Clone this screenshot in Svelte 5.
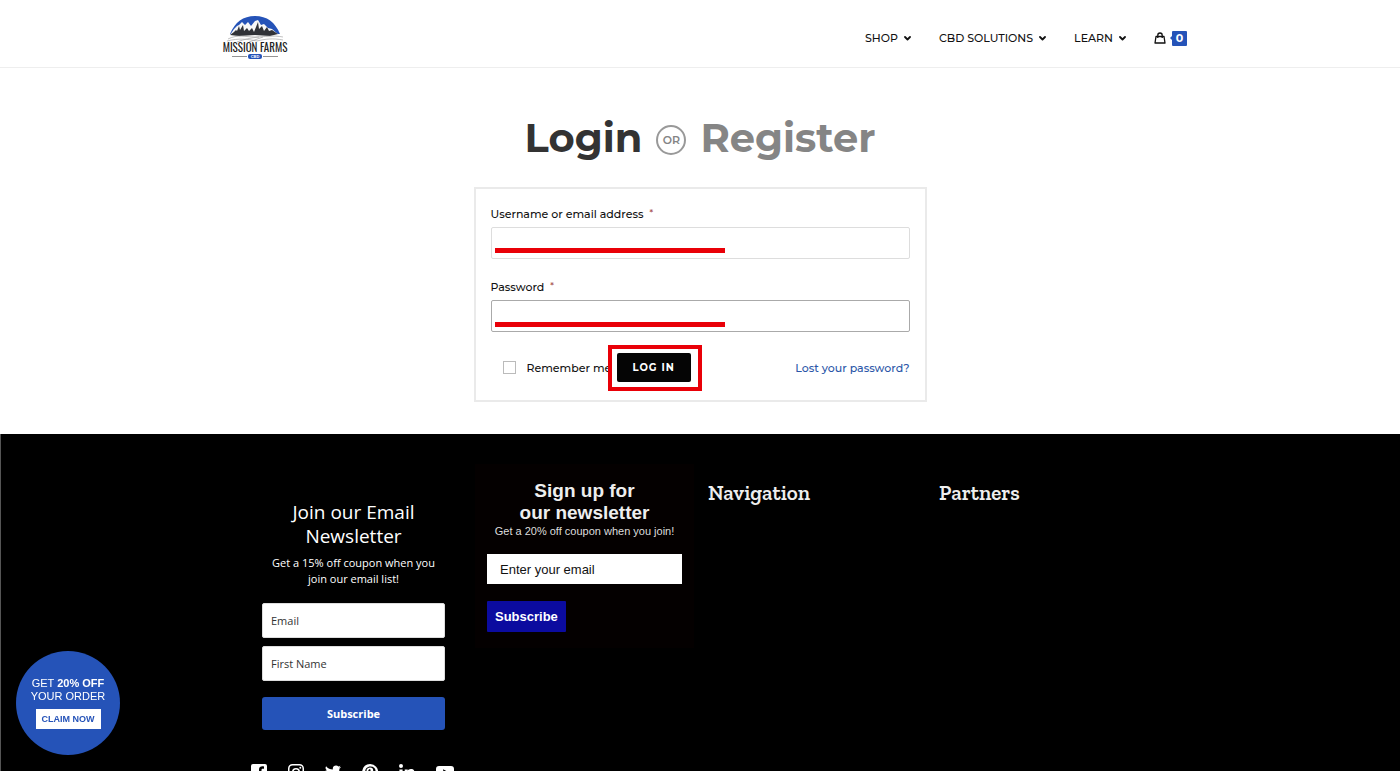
<script>
  const menu = ['Shop', 'CBD Solutions', 'Learn'];

  const socials = [
    {
      name: 'Facebook',
      d: 'M2 0h12a2 2 0 0 1 2 2v12a2 2 0 0 1-2 2h-3.500V10h2l.4-2.500h-2.400V6c0-.8.4-1.300 1.400-1.300h1.100V2.500c-2.800-.5-5 .3-5 3.200v1.800H6V10h2v6H2a2 2 0 0 1-2-2V2a2 2 0 0 1 2-2z'
    },
    {
      name: 'Instagram',
      d: 'M4.500 0h7A4.500 4.500 0 0 1 16 4.500v7a4.500 4.500 0 0 1-4.500 4.500h-7A4.500 4.500 0 0 1 0 11.500v-7A4.500 4.500 0 0 1 4.500 0zm.2 1.500a3.200 3.200 0 0 0-3.200 3.200v6.600a3.200 3.200 0 0 0 3.200 3.200h6.600a3.200 3.200 0 0 0 3.200-3.200V4.700a3.200 3.200 0 0 0-3.200-3.200zM8 4a4 4 0 1 1 0 8 4 4 0 0 1 0-8zm0 1.500a2.500 2.500 0 1 0 0 5 2.500 2.500 0 0 0 0-5zM12.300 2.700a1 1 0 1 1 0 2 1 1 0 0 1 0-2z'
    },
    {
      name: 'Twitter',
      d: 'M16 3a6.500 6.500 0 0 1-1.600 1.700C14.500 10 10.700 14.500 5 14.500c-1.900 0-3.600-.5-5-1.500 1.700.2 3.400-.3 4.800-1.300-1.400 0-2.600-1-3-2.300h1.400A3.300 3.300 0 0 1 .6 6.200l1.500.4A3.300 3.300 0 0 1 1.100 2.200 9.300 9.300 0 0 0 7.900 5.600C7.300 3.200 9 1.500 11 1.500c1 0 1.800.4 2.400 1l2.100-.8-1.400 1.800z'
    },
    {
      name: 'Pinterest',
      d: 'M8 0a8 8 0 1 1-2.400 15.600c.5-.8.9-1.700 1.100-2.600l.6-2.200c.3.6 1.200 1 2 1 2.600 0 4.200-2.400 4.200-5.200 0-2.300-2-4-4.900-4C5 2.600 3.300 5 3.300 7.200c0 1.300.7 2.500 1.600 2.900.2 0 .3 0 .3-.2l.3-.9-.2-.4c-1.800-2.300-.4-5.100 2.900-5.100 2 0 3 1.300 3 2.900 0 2.100-1 3.800-2.300 3.800-.9 0-1.300-.7-1.100-1.400l.8-2.600c0-1.600-2.300-1.400-2.300.7 0 .7.2 1.200.2 1.200L5 13.700l-.1 1.600A8 8 0 0 1 8 0z'
    },
    {
      name: 'LinkedIn',
      d: 'M2 0a2 2 0 1 1 0 4 2 2 0 0 1 0-4zM.4 5.400h3.200V16H.4zM5.700 5.400h3v1.400c.5-.9 1.600-1.700 3.100-1.700 3.300 0 4 2.100 4 5V16h-3.200v-5.200c0-1.300 0-2.900-1.700-2.900S9 9.300 9 10.800V16H5.700z'
    },
    {
      name: 'YouTube',
      wide: true,
      d: 'M3 2h12q3 0 3 3v6q0 3-3 3H3q-3 0-3-3V5q0-3 3-3zm4.200 3.300v5.400L12 8z'
    }
  ];

  let username = '';
  let password = '';
  let remember = false;
</script>

<div class="page">
  <header class="site-header">
    <div class="header-inner">
      <a class="logo" href="/" aria-label="Mission Farms CBD">
        <svg width="68" height="46" viewBox="0 0 68 46">
          <path d="M9 20C14 8 22 2 34 2s20 6 25 18z" fill="#2553b8" />
          <path d="M9 21l4-6 3-3 2-1 3-3 3 3 3-3 3 4 4-5 3-1 3 5 3-1 4 4 4 1 7 6-9 3-16-2-14 2z" fill="#f7f7f7" />
          <path d="M9 21l4-3 2-2 1 1 2-5 1 4 3-5 1 6 3-3 2 3 3-3 2 4 4-10 1 7 3-3 2 5 3-4 2 4 3-1 6 4-8 2-15-1-16 1z" fill="#303237" />
          <path d="M7 25c10-5 17-2 27-2s18-2 28 0M6 27c12-3 20-2 30 0 8-2 16-3 26-1M16 28c8-3 13-4 22-5M28 28l14-5" fill="none" stroke="#999" stroke-width="0.600" />
          <text x="34" y="38" text-anchor="middle" class="logo-name">MISSION FARMS</text>
          <path d="M11 42.500h15M42 42.500h15" stroke="#777" stroke-width="0.800" />
          <rect x="27" y="40" width="14" height="5" rx="2" fill="#2553b8" />
          <text x="34" y="44" text-anchor="middle" class="logo-tag">CBD</text>
        </svg>
      </a>

      <nav>
        {#each menu as item}
          <a class="menu-link" href="/">
            {item}
            <svg width="7" height="5" viewBox="0 0 7 5"><path d="M1 1l2.500 2.500L6 1" fill="none" stroke="currentColor" stroke-width="1.800" stroke-linecap="round" stroke-linejoin="round" /></svg>
          </a>
        {/each}
        <a class="cart" href="/" aria-label="Cart">
          <svg width="12" height="12" viewBox="0 0 12 12"><path d="M2 4.500h8l1 6.500H1zM3.800 6V3.200a2.200 2.200 0 0 1 4.400 0V6" fill="none" stroke="#111" stroke-width="1.300" stroke-linejoin="round" /></svg>
          <span class="count">0</span>
        </a>
      </nav>
    </div>
  </header>

  <main>
    <div class="switcher">
      <a class="active" href="/">Login</a>
      <span class="or">OR</span>
      <a href="/">Register</a>
    </div>

    <form class="login-box" on:submit|preventDefault>
      <div class="field">
        <label for="username">Username or email address <span class="required">*</span></label>
        <div class="control marked">
          <input id="username" type="text" bind:value={username} />
        </div>
      </div>
      <div class="field">
        <label for="password">Password <span class="required">*</span></label>
        <div class="control marked focused">
          <input id="password" type="password" bind:value={password} />
        </div>
      </div>
      <div class="actions">
        <label class="remember">
          <input type="checkbox" bind:checked={remember} />
          Remember me
        </label>
        <div class="submit">
          <button type="submit">LOG IN</button>
        </div>
        <a class="lost" href="/">Lost your password?</a>
      </div>
    </form>
  </main>

  <footer>
    <div class="columns">
      <div class="column">
        <form class="join" on:submit|preventDefault>
          <h3>Join our Email Newsletter</h3>
          <p>Get a 15% off coupon when you join our email list!</p>
          <input type="email" placeholder="Email" aria-label="Email" />
          <input type="text" placeholder="First Name" aria-label="First Name" />
          <button type="submit">Subscribe</button>
        </form>
        <div class="socials">
          {#each socials as s}
            <a href="/" aria-label={s.name}>
              <svg width={s.wide ? 18 : 16} height="16" viewBox={s.wide ? '0 0 18 16' : '0 0 16 16'}><path d={s.d} fill="#fff" fill-rule="evenodd" /></svg>
            </a>
          {/each}
        </div>
      </div>

      <div class="column">
        <form class="signup" on:submit|preventDefault>
          <h3>Sign up for<br />our newsletter</h3>
          <p>Get a 20% off coupon when you join!</p>
          <input type="email" placeholder="Enter your email" aria-label="Enter your email" />
          <button type="submit">Subscribe</button>
        </form>
      </div>

      <div class="column">
        <h4>Navigation</h4>
      </div>

      <div class="column">
        <h4>Partners</h4>
      </div>
    </div>
  </footer>

  <aside class="promo">
    <span>GET <strong>20% OFF</strong></span>
    <span>YOUR ORDER</span>
    <button type="button">CLAIM NOW</button>
  </aside>
</div>

<style>
  :global(body) {
    background: #fff;
  }

  .page {
    font-family: Montserrat, Inter, sans-serif;
    font-size: 11px;
    font-weight: 500;
    color: #111;
  }

  .page * {
    box-sizing: border-box;
  }

  a {
    color: inherit;
    text-decoration: none;
  }

  input,
  button {
    font-family: inherit;
    margin: 0;
  }

  button {
    cursor: pointer;
  }

  .site-header {
    border-bottom: 1px solid #eee;
  }

  .header-inner {
    max-width: 974px;
    margin: 0 auto;
    padding: 14px 0 7px 8px;
    display: flex;
    justify-content: space-between;
    align-items: flex-start;
  }

  .logo svg {
    display: block;
  }

  .logo-name {
    font: 400 11px Oswald, 'Roboto Condensed', 'Liberation Sans Narrow', sans-serif;
    fill: #222;
  }

  .logo-tag {
    font: bold 4px 'Liberation Sans', sans-serif;
    fill: #fff;
  }

  nav {
    display: flex;
    align-items: center;
    gap: 28px;
    padding-top: 14px;
    line-height: 20px;
  }

  .menu-link {
    display: flex;
    align-items: center;
    gap: 6px;
    text-transform: uppercase;
  }

  .cart {
    display: flex;
    align-items: center;
    gap: 6px;
  }

  .count {
    position: relative;
    width: 15px;
    background: #2553b8;
    color: #fff;
    font-size: 11px;
    font-weight: bold;
    line-height: 15px;
    text-align: center;
    border-radius: 1px;
  }

  .count::before {
    content: '';
    position: absolute;
    left: -2px;
    top: 5px;
    border: 2px solid transparent;
    border-left: 0;
    border-right-color: #2553b8;
  }

  main {
    padding: 40px 16px 32px;
  }

  .switcher {
    display: flex;
    justify-content: center;
    align-items: center;
    gap: 14px;
    font-size: 40px;
    line-height: 60px;
    font-weight: bold;
    color: #858585;
    margin-bottom: 19px;
  }

  .switcher .active {
    color: #333;
  }

  .or {
    width: 30px;
    height: 30px;
    margin-top: 4px;
    border: 2px solid #999;
    border-radius: 50%;
    font-size: 11px;
    font-weight: 600;
    line-height: 26px;
    text-align: center;
  }

  .login-box {
    max-width: 453px;
    margin: 0 auto;
    padding: 15px 15px 18px;
    border: 2px solid #eaeaea;
  }

  .field {
    margin-bottom: 18px;
  }

  .field label {
    display: block;
    line-height: 20px;
    margin-bottom: 3px;
  }

  .required {
    color: #a55;
    font-size: 9px;
    vertical-align: 2px;
    line-height: 8px;
    margin-left: 3px;
  }

  .control {
    position: relative;
  }

  .control input {
    display: block;
    width: 100%;
    height: 32px;
    padding: 4px 8px;
    border: 1px solid #ddd;
    border-radius: 2px;
    background: #fff;
    outline: none;
  }

  .focused input {
    border-color: #aaa;
  }

  .marked::after {
    content: '';
    position: absolute;
    left: 4px;
    bottom: 6px;
    width: 55%;
    height: 5px;
    background: #e90008;
  }

  .focused::after {
    bottom: 5px;
  }

  .actions {
    display: flex;
    align-items: center;
    padding-left: 12px;
    margin-top: 21px;
  }

  .remember {
    display: flex;
    align-items: center;
    gap: 11px;
    width: 114px;
    white-space: nowrap;
  }

  .remember input {
    appearance: none;
    flex: none;
    width: 13px;
    height: 13px;
    border: 1px solid #bbb;
    background: #fff;
  }

  .submit {
    position: relative;
  }

  .submit::after {
    content: '';
    position: absolute;
    inset: -8px -11px -9px -9px;
    border: 4px solid #e90008;
    pointer-events: none;
  }

  .submit button {
    display: block;
    height: 29px;
    padding: 0 16px;
    border: 0;
    border-radius: 2px;
    background: #050505;
    color: #fff;
    font-size: 10px;
    font-weight: bold;
    letter-spacing: 1px;
  }

  .lost {
    margin-left: auto;
    color: #2b56a8;
  }

  footer {
    background: #000;
    color: #fff;
    box-shadow: inset 1px 0 #555;
  }

  .columns {
    max-width: 924px;
    margin: 0 auto;
    padding: 30px 0 24px;
    display: grid;
    grid-template-columns: repeat(4, 1fr);
  }

  .join {
    padding: 36px 24px 0;
    display: flex;
    flex-direction: column;
    font-family: 'Open Sans', sans-serif;
    text-align: center;
  }

  .join h3 {
    margin: 0 0 7px;
    font-size: 19px;
    line-height: 24px;
    font-weight: normal;
  }

  .join p {
    margin: 0 0 16px;
    font-size: 11px;
    line-height: 16px;
  }

  .join input {
    height: 35px;
    margin-bottom: 8px;
    padding: 0 8px;
    border: 1px solid #ddd;
    border-radius: 2px;
    background: #fff;
    font-size: 11px;
  }

  .join input::placeholder {
    color: #333;
  }

  .join button {
    height: 33px;
    margin-top: 8px;
    border: 0;
    border-radius: 3px;
    background: #2553b8;
    color: #fff;
    font-size: 11px;
    font-weight: bold;
  }

  .socials {
    display: flex;
    gap: 21px;
    margin: 34px 0 0 13px;
  }

  .socials svg {
    display: block;
  }

  .signup {
    margin: 0 6px;
    padding: 16px 12px;
    background: #040000;
    font-family: 'Liberation Sans', Arial, sans-serif;
    text-align: center;
  }

  .signup h3 {
    margin: 0;
    font-size: 19px;
    line-height: 22px;
    color: #eee;
  }

  .signup p {
    margin: 0 -8px 16px;
    font-size: 11px;
    line-height: 14px;
    color: #ddd;
  }

  .signup input {
    display: block;
    width: 100%;
    height: 30px;
    padding: 0 12px;
    border: 1px solid #fff;
    background: #fff;
    font-size: 13px;
  }

  .signup input::placeholder {
    color: #111;
  }

  .signup button {
    display: block;
    height: 31px;
    margin-top: 17px;
    padding: 0 8px;
    border: 0;
    border-radius: 1px;
    background: #0b0b9f;
    color: #fff;
    font-size: 13px;
    font-weight: bold;
  }

  h4 {
    margin: 17px 8px 0;
    font-family: 'Roboto Slab', 'Zilla Slab', 'DejaVu Serif', serif;
    font-size: 21px;
    line-height: 24px;
    font-weight: 600;
    color: #eee;
  }

  .promo {
    position: fixed;
    left: 16px;
    bottom: 16px;
    width: 104px;
    height: 104px;
    border-radius: 50%;
    background: #2553b8;
    color: #fff;
    display: flex;
    flex-direction: column;
    align-items: center;
    justify-content: center;
    font-family: 'Liberation Sans', Arial, sans-serif;
    font-size: 11px;
    line-height: 13px;
  }

  .promo button {
    height: 20px;
    margin-top: 6px;
    padding: 0 6px;
    border: 0;
    background: #fff;
    color: #2553b8;
    font-size: 9px;
    font-weight: bold;
    white-space: nowrap;
  }
</style>
